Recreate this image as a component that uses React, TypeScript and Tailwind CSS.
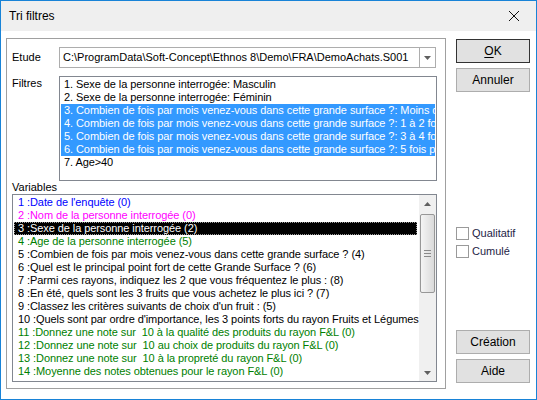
const filtres = [
  { label: '1. Sexe de la personne interrogée: Masculin', sel: false },
  { label: '2. Sexe de la personne interrogée: Féminin', sel: false },
  { label: '3. Combien de fois par mois venez-vous dans cette grande surface ?: Moins de 1 fois par mois', sel: true },
  { label: '4. Combien de fois par mois venez-vous dans cette grande surface ?: 1 à 2 fois par mois', sel: true },
  { label: '5. Combien de fois par mois venez-vous dans cette grande surface ?: 3 à 4 fois par mois', sel: true },
  { label: '6. Combien de fois par mois venez-vous dans cette grande surface ?: 5 fois par mois ou plus', sel: true },
  { label: '7. Age>40', sel: false },
];

const variables = [
  { label: "1 :Date de l'enquête (0)", color: 'text-[#0000ff]' },
  { label: '2 :Nom de la personne interrogée (0)', color: 'text-[#ff00ff]' },
  { label: '3 :Sexe de la personne interrogée (2)', color: 'text-white', sel: true },
  { label: '4 :Age de la personne interrogée (5)', color: 'text-[#008000]' },
  { label: '5 :Combien de fois par mois venez-vous dans cette grande surface ? (4)', color: 'text-black' },
  { label: '6 :Quel est le principal point fort de cette Grande Surface ? (6)', color: 'text-black' },
  { label: '7 :Parmi ces rayons, indiquez les 2 que vous fréquentez le plus : (8)', color: 'text-black' },
  { label: '8 :En été, quels sont les 3 fruits que vous achetez le plus ici ? (7)', color: 'text-black' },
  { label: "9 :Classez les critères suivants de choix d'un fruit : (5)", color: 'text-black' },
  { label: "10 :Quels sont par ordre d'importance, les 3 points forts du rayon Fruits et Légumes (3)", color: 'text-black' },
  { label: '11 :Donnez une note sur  10 à la qualité des produits du rayon F&L (0)', color: 'text-[#008000]' },
  { label: '12 :Donnez une note sur  10 au choix de produits du rayon F&L (0)', color: 'text-[#008000]' },
  { label: '13 :Donnez une note sur  10 à la propreté du rayon F&L (0)', color: 'text-[#008000]' },
  { label: '14 :Moyenne des notes obtenues pour le rayon F&L (0)', color: 'text-[#008000]' },
];

function Arrow({ up }: { up?: boolean }) {
  return (
    <svg width="7" height="4" viewBox="0 0 7 4" className={up ? '' : 'rotate-180'}>
      <path d="M3.5 0 L7 4 L0 4 Z" fill="#606060" />
    </svg>
  );
}

function Button({ children, primary }: { children: React.ReactNode; primary?: boolean }) {
  return (
    <button
      className={`w-[74px] h-[24px] bg-[#e1e1e1] text-[12px] font-normal text-black flex items-center justify-center border ${
        primary ? 'border-[#333333]' : 'border-[#adadad]'
      }`}
    >
      {children}
    </button>
  );
}

function Check({ label }: { label: string }) {
  return (
    <label className="flex items-center gap-[3px] h-[18px] text-[11px] text-[#1e1e46]">
      <span className="w-[13px] h-[13px] border border-[#9a9a9a] bg-white" />
      {label}
    </label>
  );
}

export default function App() {
  return (
    <div className="w-[537px] h-[400px] border border-[#1883d7] bg-white flex flex-col font-['Liberation_Sans',Arial,sans-serif] text-black overflow-hidden">
      {/* title bar */}
      <div className="h-[30px] bg-[#efefef] flex items-center justify-between pl-[8px] pr-[17px] shrink-0">
        <span className="text-[12px]">Tri filtres</span>
        <svg width="10" height="10" viewBox="0 0 10 10">
          <path d="M0 0 L10 10 M10 0 L0 10" stroke="#111" strokeWidth="1" />
        </svg>
      </div>

      <div className="flex flex-1 pl-[5px] pt-[7px]">
        {/* group box */}
        <div className="w-[440px] h-[351px] border border-[#a0a0a0] flex flex-col pl-[5px] pr-[8px] pt-[8px]">
          <div className="flex items-center h-[21px]">
            <span className="w-[47px] text-[11px]">Etude</span>
            <div className="w-[377px] h-[21px] border border-[#adadad] flex items-center">
              <span className="flex-1 pl-[3px] text-[11px] whitespace-nowrap overflow-hidden">
                C:\ProgramData\Soft-Concept\Ethnos 8\Demo\FRA\DemoAchats.S001
              </span>
              <span className="w-[16px] h-full border-l border-[#adadad] flex items-center justify-center">
                <Arrow />
              </span>
            </div>
          </div>

          <div className="flex mt-[8px]">
            <span className="w-[47px] text-[11px] -mt-[1px]">Filtres</span>
            <div className="w-[378px] h-[105px] border border-[#828790] pt-[1px] px-[1px] overflow-hidden">
              {filtres.map((f) => (
                <div
                  key={f.label}
                  className={`h-[13px] leading-[13px] text-[11px] tracking-[-0.08px] pl-[3px] whitespace-nowrap ${
                    f.sel ? 'bg-[#3399ff] text-white' : ''
                  }`}
                >
                  {f.label}
                </div>
              ))}
            </div>
          </div>

          <span className="text-[11px] leading-[13px]">Variables</span>

          <div className="w-[425px] h-[188px] border border-[#828790] flex">
            <div className="flex-1 overflow-hidden pt-[1px] pl-[1px] pr-[2px]">
              {variables.map((v) => (
                <div
                  key={v.label}
                  className={`h-[13px] leading-[11px] text-[11px] tracking-[-0.08px] pl-[3px] whitespace-pre ${v.color} ${
                    v.sel ? 'bg-black border border-dotted border-[#9a9a9a]' : 'border border-transparent'
                  }`}
                >
                  {v.label}
                </div>
              ))}
            </div>
            <div className="w-[17px] bg-[#f0f0f0] flex flex-col items-center">
              <div className="h-[17px] w-full flex items-center justify-center">
                <Arrow up />
              </div>
              <div className="mt-[2px] w-[15px] h-[79px] rounded-[2px] border border-[#979797] bg-gradient-to-r from-[#f4f4f4] to-[#dadada] flex flex-col items-center justify-center gap-[2px]">
                <span className="w-[7px] h-[1px] bg-[#8a8a8a]" />
                <span className="w-[7px] h-[1px] bg-[#8a8a8a]" />
                <span className="w-[7px] h-[1px] bg-[#8a8a8a]" />
              </div>
              <div className="flex-1" />
              <div className="h-[17px] w-full flex items-center justify-center">
                <Arrow />
              </div>
            </div>
          </div>
        </div>

        {/* right column */}
        <div className="ml-[10px] w-[74px] flex flex-col">
          <div className="mt-[1px]">
            <Button primary>
              <span className="underline underline-offset-2">O</span>K
            </Button>
          </div>
          <div className="mt-[5px]">
            <Button>Annuler</Button>
          </div>
          <div className="mt-[132px] flex flex-col">
            <Check label="Qualitatif" />
            <Check label="Cumulé" />
          </div>
          <div className="mt-[70px]">
            <Button>Création</Button>
          </div>
          <div className="mt-[5px]">
            <Button>Aide</Button>
          </div>
        </div>
      </div>
    </div>
  );
}
